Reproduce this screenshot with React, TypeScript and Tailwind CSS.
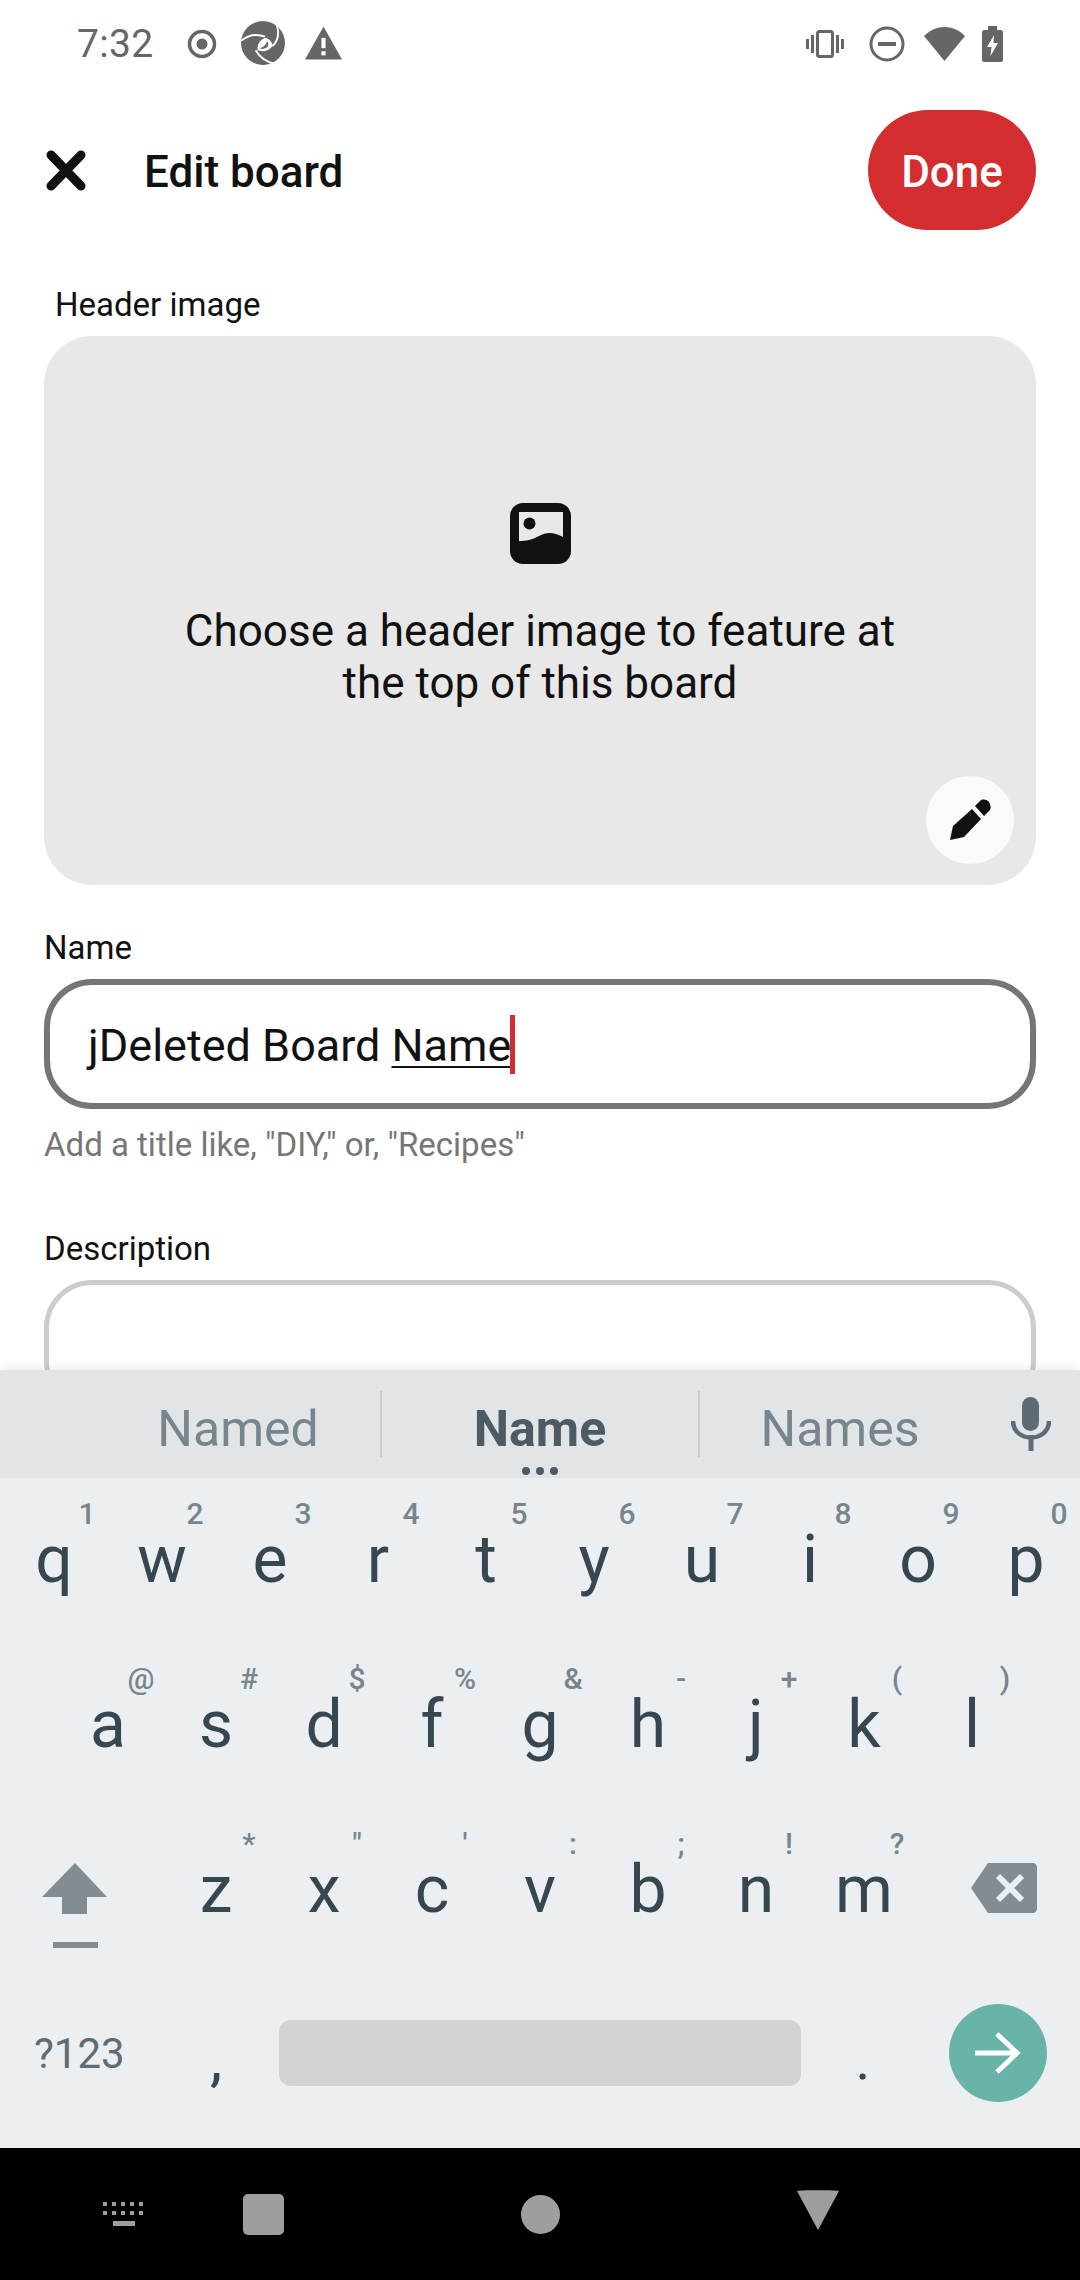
import React from 'react';

const rowOne = [['q', '1'], ['w', '2'], ['e', '3'], ['r', '4'], ['t', '5'], ['y', '6'], ['u', '7'], ['i', '8'], ['o', '9'], ['p', '0']];
const rowTwo = [['a', '@'], ['s', '#'], ['d', '$'], ['f', '%'], ['g', '&'], ['h', '-'], ['j', '+'], ['k', '('], ['l', ')']];
const rowThree = [['z', '*'], ['x', '"'], ['c', "'"], ['v', ':'], ['b', ';'], ['n', '!'], ['m', '?']];

// one letter key with its small long-press hint
const Key = ({ letter, hint }: { letter: string; hint: string }) => (
  <div className="relative w-[108px] h-[165px] flex justify-center pt-[49px] text-[66px] leading-none text-[#37474f]">
    {letter}
    <span className="absolute top-[20px] right-[1px] w-[40px] text-center text-[30px] leading-[32px] font-medium text-[#78858c]">
      {hint}
    </span>
  </div>
);

const StatusBar = () => (
  <div className="h-[88px] flex items-center justify-between pl-[77px] pr-[77px] text-[#666666]">
    <div className="flex items-center">
      <span className="text-[39px] leading-none tracking-[0.3px]">7:32</span>
      <svg className="w-[30px] h-[30px] ml-[34px]" viewBox="0 0 30 30">
        <circle cx="15" cy="15" r="12.5" fill="none" stroke="#666666" strokeWidth="3.5" />
        <circle cx="15" cy="15" r="5.5" fill="#666666" />
      </svg>
      <svg className="w-[44px] h-[44px] ml-[24px] -mt-[2px]" viewBox="0 0 42 42">
        <circle cx="21" cy="21" r="21" fill="#666666" />
        <path d="M33 1C37 10 36 18 30 24" fill="none" stroke="#ffffff" strokeWidth="1.8" />
        <path d="M0 19C7 13 15 12 23 15" fill="none" stroke="#ffffff" strokeWidth="1.8" />
        <path d="M14 28C18 35 24 39 32 41" fill="none" stroke="#ffffff" strokeWidth="1.8" />
        <path d="M23 16C27 17 30 20 30 24C27 28 21 30 16 28C15 23 18 18 23 16Z" fill="#ffffff" />
        <path d="M25 19C27 22 26 25 23 26C21 27 19 27 18 26C21 25 24 23 25 19Z" fill="#666666" />
      </svg>
      <svg className="w-[37px] h-[34px] ml-[20px] -mt-[2px]" viewBox="0 0 36 32">
        <path d="M18 0L36 32H0Z" fill="#666666" />
        <rect x="16" y="11" width="4" height="10" fill="#ffffff" />
        <rect x="16" y="24" width="4" height="4" fill="#ffffff" />
      </svg>
    </div>
    <div className="flex items-center">
      <svg className="w-[38px] h-[28px]" viewBox="0 0 38 28">
        <rect x="11.5" y="1.5" width="15" height="25" rx="2" fill="none" stroke="#666666" strokeWidth="3" />
        <rect x="5" y="5" width="3" height="18" fill="#666666" />
        <rect x="30" y="5" width="3" height="18" fill="#666666" />
        <rect x="0" y="9" width="3" height="10" fill="#666666" />
        <rect x="35" y="9" width="3" height="10" fill="#666666" />
      </svg>
      <svg className="w-[36px] h-[36px] ml-[25px]" viewBox="0 0 36 36">
        <circle cx="18" cy="18" r="16" fill="none" stroke="#666666" strokeWidth="3" />
        <rect x="9" y="16" width="18" height="4" fill="#666666" />
      </svg>
      <svg className="w-[41px] h-[34px] ml-[19px]" viewBox="0 0 41 34">
        <path d="M0 9C12 -3 29 -3 41 9L20.5 34Z" fill="#666666" />
      </svg>
      <svg className="w-[21px] h-[36px] ml-[17px]" viewBox="0 0 21 36">
        <path d="M6 0H15V4H19C20 4 21 5 21 6V34C21 35 20 36 19 36H2C1 36 0 35 0 34V6C0 5 1 4 2 4H6Z" fill="#666666" />
        <path d="M12 9L5 21H9.5L8.5 30L16 17H11.5Z" fill="#ffffff" />
      </svg>
    </div>
  </div>
);

const Keyboard = () => (
  <div className="relative z-10 shrink-0 h-[778px] bg-[#eceff1] shadow-[0_-3px_8px_rgba(0,0,0,0.07)]">
    {/* suggestions */}
    <div className="relative h-[108px] bg-[#e2e5e8] flex items-center text-[50px] leading-none text-[#78858c]">
      <div className="w-[380px] pl-[96px] pt-[10px] text-center">Named</div>
      <div className="w-[2px] h-[66px] bg-[#c9cdd0]" />
      <div className="w-[316px] pt-[10px] text-center font-bold text-[#4f5b62]">Name</div>
      <div className="w-[2px] h-[66px] bg-[#c9cdd0]" />
      <div className="w-[280px] pt-[10px] text-center">Names</div>
      <svg className="w-[40px] h-[54px] ml-[31px]" viewBox="0 0 40 54">
        <rect x="11" y="0" width="17" height="34" rx="8.5" fill="#5f6b74" />
        <path d="M2 24C2 46 38 46 38 24" fill="none" stroke="#5f6b74" strokeWidth="4.5" />
        <rect x="17.5" y="38" width="5" height="16" fill="#5f6b74" />
      </svg>
      <div className="absolute bottom-[3px] left-[522px] flex gap-[6px]">
        <span className="w-[8px] h-[8px] rounded-full bg-[#4f5b62]" />
        <span className="w-[8px] h-[8px] rounded-full bg-[#4f5b62]" />
        <span className="w-[8px] h-[8px] rounded-full bg-[#4f5b62]" />
      </div>
    </div>

    <div className="flex">
      {rowOne.map(([l, h]) => <Key key={l} letter={l} hint={h} />)}
    </div>
    <div className="flex pl-[54px]">
      {rowTwo.map(([l, h]) => <Key key={l} letter={l} hint={h} />)}
    </div>
    <div className="flex">
      <div className="w-[162px] h-[165px] pl-[42px] pt-[55px]">
        <svg className="w-[66px] h-[86px]" viewBox="0 0 66 86">
          <path d="M33 0L65 34H45V51H20V34H0Z" fill="#838c91" />
          <rect x="11" y="79" width="45" height="6" fill="#838c91" />
        </svg>
      </div>
      {rowThree.map(([l, h]) => <Key key={l} letter={l} hint={h} />)}
      <div className="w-[162px] h-[165px] pl-[53px] pt-[55px]">
        <svg className="w-[66px] h-[50px]" viewBox="0 0 66 50">
          <path d="M17 0H62C64 0 66 2 66 4V46C66 48 64 50 62 50H17L0 25Z" fill="#838c91" />
          <path d="M27 13L51 37M51 13L27 37" stroke="#eceff1" strokeWidth="6" />
        </svg>
      </div>
    </div>
    <div className="flex items-center h-[165px] pb-[6px] text-[#5f6c73]">
      <div className="w-[162px] pl-[34px] pt-[3px] text-[42px] leading-none">?123</div>
      <div className="w-[117px] text-center text-[62px] leading-none text-[#37474f] pt-[12px] pr-[9px]">,</div>
      <div className="w-[522px] h-[66px] rounded-[12px] bg-[#d0d4d7]" />
      <div className="w-[148px] pr-[24px] text-center text-[56px] leading-none text-[#37474f] pt-[14px]">.</div>
      <div className="w-[98px] h-[98px] rounded-full bg-[#6ab3a8] flex items-center justify-center">
        <svg className="w-[46px] h-[44px]" viewBox="0 0 46 44">
          <path d="M0 22H42M22 3L42 22L22 41" fill="none" stroke="#ffffff" strokeWidth="5" />
        </svg>
      </div>
    </div>
  </div>
);

const NavBar = () => (
  <div className="shrink-0 h-[132px] bg-black flex items-center justify-between pl-[103px] pr-[240px]">
    <svg className="w-[42px] h-[24px]" viewBox="0 0 42 24">
      <g fill="#9e9e9e">
        <path d="M0 0h4v4H0zM9 0h4v4H9zM18 0h4v4h-4zM27 0h4v4h-4zM36 0h4v4h-4zM0 9h4v4H0zM9 9h4v4H9zM18 9h4v4h-4zM27 9h4v4h-4zM36 9h4v4h-4z" />
        <rect x="10" y="19" width="22" height="5" />
      </g>
    </svg>
    <div className="w-[41px] h-[41px] rounded-[5px] bg-[#9e9e9e] mr-[237px] ml-[98px]" />
    <div className="w-[39px] h-[39px] rounded-full bg-[#9e9e9e] mr-[236px]" />
    <svg className="w-[44px] h-[40px] -mt-[8px]" viewBox="0 0 44 40">
      <path d="M1 1C0 0 44 0 43 1L22 40Z" fill="#9e9e9e" />
    </svg>
  </div>
);

const App = () => {
  return (
    <div className="w-[1080px] h-[2280px] flex flex-col overflow-hidden bg-white font-['Roboto',sans-serif]">
      <StatusBar />

      {/* header */}
      <div className="h-[162px] shrink-0 flex items-center justify-between pt-[2px] pl-[46px] pr-[44px]">
        <div className="flex items-center">
          <svg className="w-[40px] h-[41px]" viewBox="0 0 40 41">
            <path d="M5 5L35 36M35 5L5 36" fill="none" stroke="#111111" strokeWidth="9" strokeLinecap="round" />
          </svg>
          <h1 className="ml-[58px] pt-[4px] text-[44px] leading-none font-medium text-[#111111]">Edit board</h1>
        </div>
        <button className="w-[168px] h-[120px] pt-[3px] rounded-full bg-[#d32d2f] text-[44px] font-medium text-white">Done</button>
      </div>

      <main className="flex-1 min-h-0 overflow-hidden px-[44px]">
        <div className="ml-[11px] mt-[34px] pt-[1px] h-[40px] text-[33px] leading-[40px] text-[#111111]">Header image</div>

        <div className="relative mt-[12px] h-[549px] rounded-[48px] bg-[#e8e8e8] flex flex-col items-center pt-[167px]">
          <svg className="w-[61px] h-[61px]" viewBox="0 0 61 61">
            <rect width="61" height="61" rx="13" fill="#111111" />
            <path d="M9 9H53V34C43 29 37 29 29 33C22 37 16 38 9 38Z" fill="#e8e8e8" />
            <circle cx="19.5" cy="20.5" r="6" fill="#111111" />
          </svg>
          <p className="mt-[41px] text-[44px] leading-[52px] text-center text-[#111111]">
            Choose a header image to feature at
            <br />
            the top of this board
          </p>
          <div className="absolute right-[22px] bottom-[21px] w-[88px] h-[88px] rounded-full bg-[#fafafa] flex items-center justify-center">
            <svg className="w-[42px] h-[42px]" viewBox="0 0 42 42">
              <path d="M1 41L4 27L23 10L32 20L15 38Z" fill="#111111" />
              <path d="M26 7L31 2C33 0 37 0 40 3C42 6 42 9 41 11L35 17Z" fill="#111111" />
            </svg>
          </div>
        </div>

        <div className="mt-[45px] text-[33px] leading-[36px] text-[#111111]">Name</div>
        <div className="mt-[13px] h-[130px] rounded-[48px] border-[6px] border-[#757575] flex items-center pl-[38px] text-[45px] text-[#111111]">
          <span className="pt-[4px]">jDeleted Board</span>
          <span className="pt-[4px] ml-[11px] underline decoration-[2px] underline-offset-[5px]">Name</span>
          <span className="w-[5px] h-[59px] -ml-[1px] bg-[#d32d2f]" />
        </div>
        <div className="mt-[17px] text-[33px] leading-[38px] text-[#767676]">Add a title like, "DIY," or, "Recipes"</div>

        <div className="mt-[67px] text-[33px] leading-[36px] text-[#111111]">Description</div>
        <div className="mt-[13px] h-[129px] rounded-[48px] border-[5px] border-[#cccccc]" />
      </main>

      <Keyboard />
      <NavBar />
    </div>
  );
};

export default App;
